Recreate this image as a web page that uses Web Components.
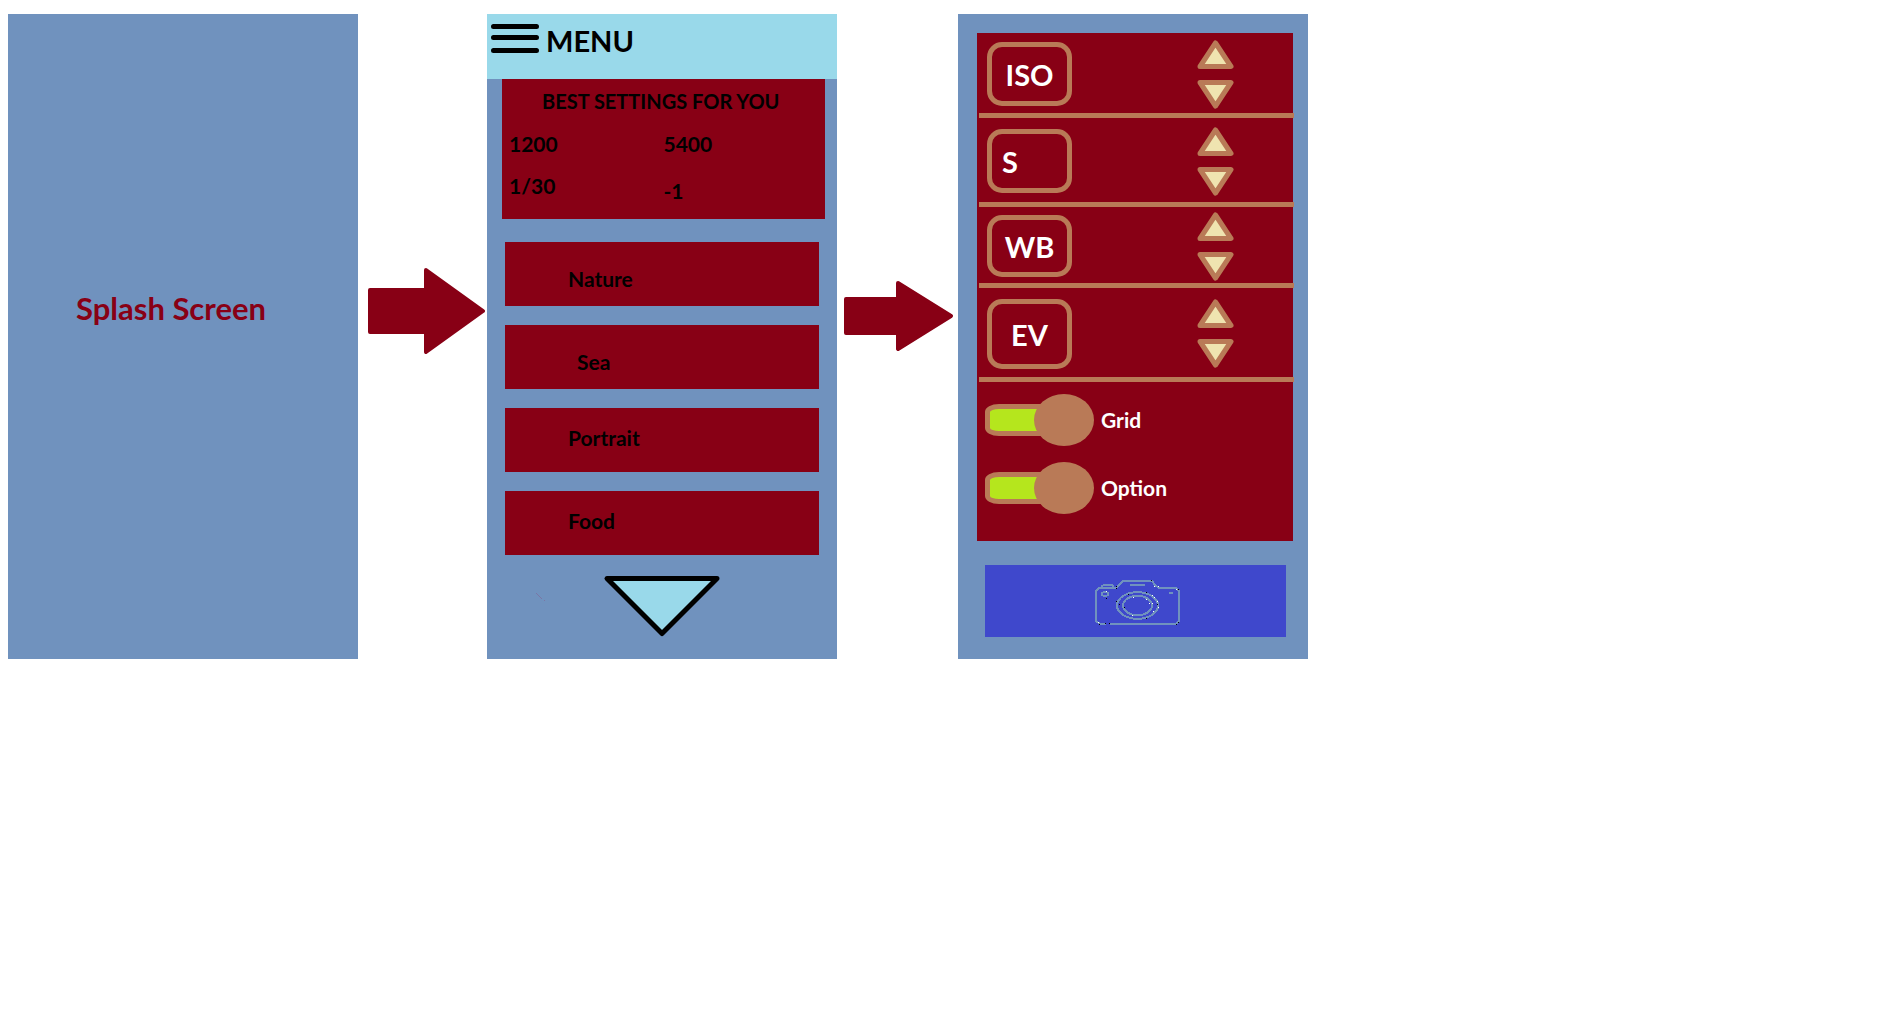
<!DOCTYPE html>
<html lang="en">
<head>
<meta charset="utf-8">
<title>Camera app screen flow</title>
<style>
  :root {
    --steel: #7092be;
    --wine: #880015;
    --sky: #99d9ea;
    --copper: #b97a57;
    --cream: #efe4b0;
    --lime: #b5e61d;
    --indigo: #3f48cc;
  }
  body { margin: 0; background: #fff; font: 700 21px/24px Lato, "Liberation Sans", sans-serif; color: #000; }
</style>
</head>
<body>
<flow-board>
  <splash-screen>Splash Screen</splash-screen>
  <flow-arrow size="large"></flow-arrow>
  <menu-screen>
    <best-settings>
      <span slot="title">BEST SETTINGS FOR YOU</span>
      <span slot="left">1200</span>
      <span slot="left">1/30</span>
      <span slot="right">5400</span>
      <span slot="right">-1</span>
    </best-settings>
    <scene-list>
      <scene-item class="low">Nature</scene-item>
      <scene-item class="low inset">Sea</scene-item>
      <scene-item>Portrait</scene-item>
      <scene-item>Food</scene-item>
    </scene-list>
  </menu-screen>
  <flow-arrow size="small"></flow-arrow>
  <camera-screen>
    <setting-row style="--row: 85px; --key: 64px">ISO</setting-row>
    <setting-row style="--row: 89px; --key: 64px" class="start">S</setting-row>
    <setting-row style="--row: 81px; --key: 62px">WB</setting-row>
    <setting-row style="--row: 94px; --key: 70px">EV</setting-row>
    <toggle-switch slot="toggles">Grid</toggle-switch>
    <toggle-switch slot="toggles">Option</toggle-switch>
  </camera-screen>
</flow-board>

<script>
const define = (name, html) => {
  const template = document.createElement('template');
  template.innerHTML = `<style>
    *, ::before, ::after { box-sizing: border-box; }
    button { font: inherit; color: inherit; border: 0; padding: 0; background: none; cursor: pointer; }
    svg { display: block; }
  </style>` + html;
  customElements.define(name, class extends HTMLElement {
    constructor() {
      super();
      this.attachShadow({ mode: 'open' }).append(template.content.cloneNode(true));
    }
  });
};

define('flow-board', `
  <style>
    :host { display: grid; align-items: start; padding: 14px 0 24px 8px;
      grid-template-columns: minmax(280px, 350fr) 129fr minmax(280px, 350fr) 121fr minmax(280px, 350fr) 583fr; }
  </style>
  <slot></slot>`);

define('splash-screen', `
  <style>
    :host { display: block; align-self: stretch; background: var(--steel); color: var(--wine); }
    h1 { margin: 0; padding: 276px 0 0 68px; font-size: 31px; line-height: 36px; }
  </style>
  <h1><slot></slot></h1>`);

define('flow-arrow', `
  <style>
    :host { display: block; padding-top: 254px; }
    :host([size="small"]) { padding-top: 267px; }
    svg { width: 100%; fill: var(--wine); stroke: var(--wine); stroke-width: 4; stroke-linejoin: round; }
    .small, :host([size="small"]) .large { display: none; }
    :host([size="small"]) .small { display: block; }
  </style>
  <svg class="large" viewBox="0 0 129 86" aria-hidden="true"><path d="M12 22H68V2L125 43L68 84V64H12Z"/></svg>
  <svg class="small" viewBox="0 0 121 70" aria-hidden="true"><path d="M9 18H61V2L114 35L61 68V52H9Z"/></svg>`);

define('menu-screen', `
  <style>
    :host { display: block; background: var(--steel); padding-bottom: 23px; }
    header { display: flex; gap: 7px; padding: 9px 4px 20px; background: var(--sky); }
    h2 { margin: 0; font-size: 29px; line-height: 36px; }
    .more { display: block; margin: 21px auto 0; }
    .more svg { overflow: visible; }
  </style>
  <header>
    <button aria-label="Open menu">
      <svg width="48" height="36" viewBox="0 0 48 36" stroke="#000" stroke-width="5" stroke-linecap="round">
        <path d="M2.500 3.500H45.500M2.500 14.500H45.500M2.500 27.500H45.500"/>
      </svg>
    </button>
    <h2>MENU</h2>
  </header>
  <slot></slot>
  <button class="more" aria-label="More scenes">
    <svg width="116" height="60" viewBox="0 0 116 60">
      <path d="M3 2.500H113L58 57.500Z" fill="#99d9ea" stroke="#000" stroke-width="5" stroke-linejoin="round"/>
      <path d="M-68 17L-62 23M-60 24.500h1" fill="none" stroke="#7c6f9e" stroke-width=".8"/>
    </svg>
  </button>`);

define('best-settings', `
  <style>
    :host { display: block; margin: 0 12px 0 15px; padding: 10px 7px 16px; background: var(--wine); }
    .title { padding-left: 33px; font-size: 20px; }
    .values { display: grid; grid-template-columns: 1fr 1fr; padding-top: 19px; }
    .col { display: flex; flex-direction: column; gap: 18px; }
    .col + .col { gap: 23px; }
  </style>
  <div class="title"><slot name="title"></slot></div>
  <div class="values">
    <div class="col"><slot name="left"></slot></div>
    <div class="col"><slot name="right"></slot></div>
  </div>`);

define('scene-list', `
  <style>:host { display: flex; flex-direction: column; gap: 19px; padding: 23px 18px 0; }</style>
  <slot></slot>`);

define('scene-item', `
  <style>
    :host { display: block; }
    button { display: flex; align-items: flex-start; width: 100%; height: 64px; padding: 18px 0 0 63px; background: var(--wine); }
    :host(.low) button { padding-top: 25px; }
    :host(.inset) button { padding-left: 72px; }
  </style>
  <button><slot></slot></button>`);

define('camera-screen', `
  <style>
    :host { display: block; background: var(--steel); padding: 19px 15px 22px 19px; color: #fff; }
    section { background: var(--wine); }
    .toggles { display: flex; flex-direction: column; gap: 16px; padding: 12px 8px 27px; }
    .shutter { display: flex; align-items: center; justify-content: center; width: calc(100% - 15px); height: 72px; margin: 24px 7px 0 8px; background: var(--indigo); }
  </style>
  <section>
    <slot></slot>
    <div class="toggles"><slot name="toggles"></slot></div>
  </section>
  <button class="shutter" aria-label="Take photo">
    <svg width="91" height="50" viewBox="-4 -3 91 50" fill="none" stroke="#7092be" stroke-width="2" shape-rendering="crispEdges">
      <path d="M12 45H6L2 42V12L5 9H22L24 7L29 2H58L61 6L65 9H82L85 12V42L82 45H16"/>
      <path d="M8 9V7L10 6H18L20 8M36 6H51M75 14H79"/>
      <ellipse cx="11" cy="15" rx="3" ry="2"/>
      <ellipse cx="43.500" cy="26.500" rx="20.500" ry="13.300"/>
      <ellipse cx="43.500" cy="26.500" rx="14.500" ry="9.700"/>
      <path stroke="#000" stroke-width="1" d="M22 7.500h1M22 9.500h1M57 1.500h1M84 10.500h1M22 22.500h1M25 25.500h1M34 15.500h1M52 13.500h1M30 28.500h1M52 39.500h1M12 19.500h1M5 45.500h1M11 44.500h1M15 44.500h1M82 45.500h1M84 43.500h1M63 25.500h1"/>
      <path stroke="#fff" stroke-width="1" d="M60 7.500h1M64 7.500h1M82 10.500h1M58 16.500h1M60 18.500h1M63 22.500h1M64 28.500h1M59 32.500h1M38 36.500h1M39 18.500h1M12 12.500h1M52 20.500h1M55 24.500h1M58 24.500h1M4 43.500h1"/>
    </svg>
  </button>`);

define('setting-row', `
  <style>
    :host { display: flex; align-items: center; justify-content: space-between; box-sizing: border-box; height: var(--row);
      margin: 0 -1px 0 2px; padding: 2px 60px 0 8px; border-bottom: 5px solid var(--copper); }
    .key { display: flex; align-items: center; justify-content: center; width: 85px; height: var(--key); padding-top: 2px;
      border: 5px solid var(--copper); border-radius: 15px; font-size: 29px; line-height: 36px; }
    :host(.start) .key { justify-content: flex-start; padding-left: 10px; }
    .steps { display: flex; flex-direction: column; gap: 11px; }
    .steps svg { fill: var(--cream); stroke: var(--copper); stroke-width: 5; stroke-linejoin: round; }
  </style>
  <button class="key"><slot></slot></button>
  <div class="steps">
    <button aria-label="Increase"><svg width="37" height="29" viewBox="0 0 37 29"><path d="M18.500 3L34 26.500H3Z"/></svg></button>
    <button aria-label="Decrease"><svg width="37" height="29" viewBox="0 0 37 29"><path d="M18.500 26L34 2.500H3Z"/></svg></button>
  </div>`);

define('toggle-switch', `
  <style>
    :host { display: block; }
    label { display: flex; align-items: center; gap: 7px; }
    input { appearance: none; display: grid; grid-template-columns: 49px 60px; align-items: center; width: 109px; height: 52px; margin: 0; }
    input::before { content: ""; grid-area: 1 / 1 / 2 / 3; width: 75px; height: 32px; background: #c3c3c3;
      border: 5px solid var(--copper); border-radius: 14px 0 0 14px / 8px 0 0 8px; }
    input::after { content: ""; grid-area: 1 / 2 / 2 / 3; height: 52px; border-radius: 50%; background: var(--copper); }
    input:checked::before { background: var(--lime); }
  </style>
  <label><input type="checkbox" checked><span><slot></slot></span></label>`);
</script>
</body>
</html>
